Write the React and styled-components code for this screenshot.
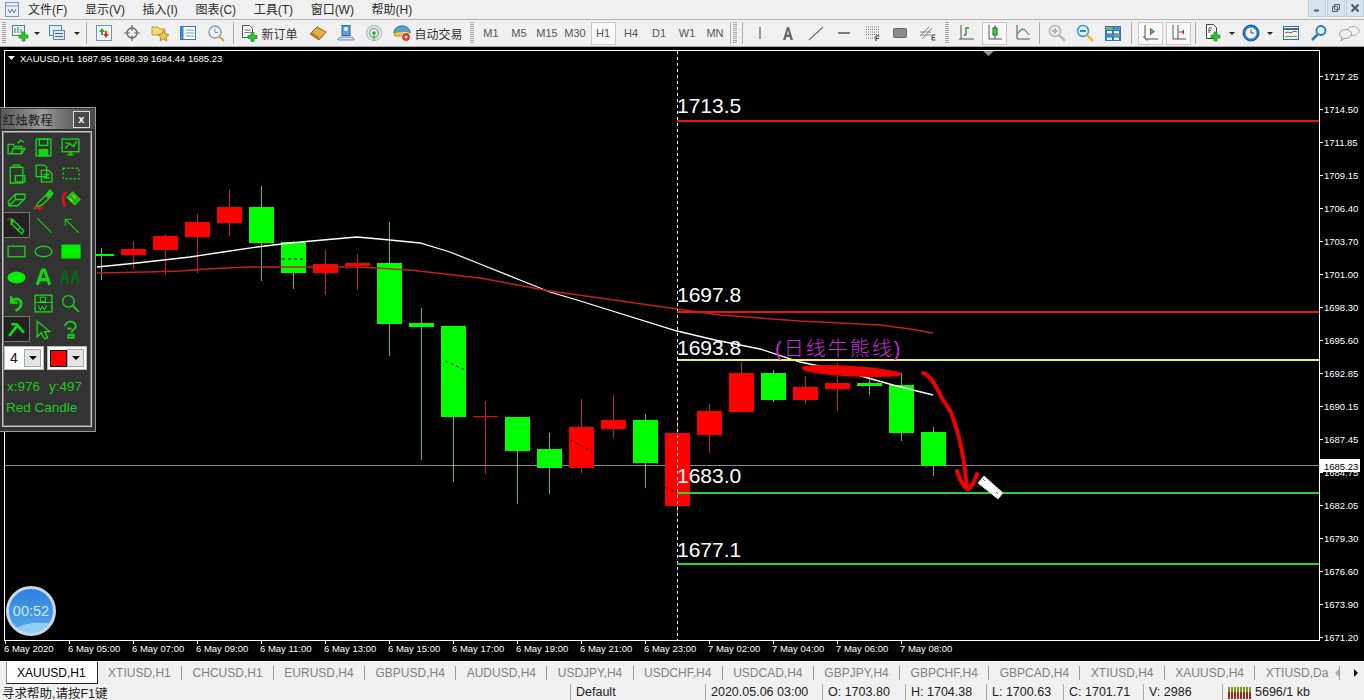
import React from 'react';
import styled, { createGlobalStyle } from 'styled-components';

const UI_FONT = `"Liberation Sans", "Noto Sans CJK SC", sans-serif`;
const GREEN = '#00ff00';
const RED = '#ff0000';

// x, wick top, wick bottom, body top, body bottom (page pixels)
const candles = [
  [101, 248, 280, 254, 256, 'g'],
  [133, 241, 269, 249, 255, 'r'],
  [165, 234, 275, 236, 250, 'r'],
  [197, 214, 273, 222, 237, 'r'],
  [229, 189, 236, 207, 223, 'r'],
  [261, 186, 281, 207, 243, 'g'],
  [293, 241, 289, 242, 273, 'g'],
  [325, 250, 295, 264, 273, 'r'],
  [357, 254, 290, 263, 266, 'r'],
  [389, 222, 356, 263, 324, 'g'],
  [421, 308, 460, 323, 327, 'g'],
  [453, 326, 482, 326, 417, 'g'],
  [485, 401, 474, 416, 417, 'r'],
  [517, 417, 504, 417, 451, 'g'],
  [549, 433, 494, 449, 468, 'g'],
  [581, 399, 473, 427, 468, 'r'],
  [613, 395, 438, 420, 429, 'r'],
  [645, 414, 488, 420, 463, 'g'],
  [677, 417, 513, 433, 506, 'r'],
  [709, 404, 453, 411, 435, 'r'],
  [741, 362, 412, 373, 412, 'r'],
  [773, 370, 402, 373, 400, 'g'],
  [805, 376, 404, 387, 400, 'r'],
  [837, 363, 411, 383, 389, 'r'],
  [869, 370, 395, 383, 386, 'g'],
  [901, 373, 441, 385, 433, 'g'],
  [933, 427, 476, 432, 466, 'g'],
];

const prices = ['1717.25', '1714.50', '1711.85', '1709.15', '1706.40', '1703.70', '1701.00', '1698.30', '1695.60',
  '1692.85', '1690.15', '1687.45', '1684.75', '1682.05', '1679.30', '1676.60', '1673.90', '1671.20'];

const times = ['6 May 2020', '6 May 05:00', '6 May 07:00', '6 May 09:00', '6 May 11:00', '6 May 13:00', '6 May 15:00',
  '6 May 17:00', '6 May 19:00', '6 May 21:00', '6 May 23:00', '7 May 02:00', '7 May 04:00', '7 May 06:00', '7 May 08:00'];

const levels = [
  { y: 120, label: '1713.5', color: '#e81515' },
  { y: 311, label: '1697.8', color: '#e81515' },
  { y: 359, label: '1693.8', color: '#f4f45a' },
  { y: 492, label: '1683.0', color: '#2fd02f' },
  { y: 563, label: '1677.1', color: '#2fd02f' },
];

const levelLabelY = { '1713.5': 113, '1697.8': 302, '1693.8': 355, '1683.0': 483, '1677.1': 557 };

const tabs = ['XAUUSD,H1', 'XTIUSD,H1', 'CHCUSD,H1', 'EURUSD,H4', 'GBPUSD,H4', 'AUDUSD,H4', 'USDJPY,H4', 'USDCHF,H4',
  'USDCAD,H4', 'GBPJPY,H4', 'GBPCHF,H4', 'GBPCAD,H4', 'XTIUSD,H4', 'XAUUSD,H4', 'XTIUSD,Da'];

const menus = ['文件(F)', '显示(V)', '插入(I)', '图表(C)', '工具(T)', '窗口(W)', '帮助(H)'];

const periods = ['M1', 'M5', 'M15', 'M30', 'H1', 'H4', 'D1', 'W1', 'MN'];

const GlobalStyle = createGlobalStyle`
  html, body {
    margin: 0;
    padding: 0;
    background: #f0f0f0;
    overflow: hidden;
  }
  * {
    box-sizing: border-box;
  }
`;

const Page = styled.div`
  width: 1364px;
  height: 700px;
  display: flex;
  flex-direction: column;
  font-family: ${UI_FONT};
  background: #f0f0f0;
  overflow: hidden;
`;

const MenuBar = styled.div`
  height: 20px;
  display: flex;
  align-items: center;
  padding-left: 4px;
  border-bottom: 1px solid #b4b4b4;
  flex: none;
`;

const MenuList = styled.div`
  display: flex;
  gap: 17.6px;
  margin-left: 8px;
`;

const MenuItem = styled.span`
  font-size: 12px;
  line-height: 16px;
  color: #2c2c2c;
`;

const WindowButtons = styled.div`
  margin-left: auto;
  display: flex;
  gap: 1px;
  align-self: flex-start;
`;

const WindowButton = styled.div`
  width: 18px;
  height: 17px;
  background: #d6e4f0;
  border: 1px solid #b9cfe0;
  border-top: none;
  display: flex;
  align-items: center;
  justify-content: center;
`;

const Toolbar = styled.div`
  height: 27px;
  flex: none;
  display: flex;
  align-items: center;
  border-bottom: 1px solid #a8a8a8;
`;

const Grip = styled.div`
  width: ${p => p.$w}px;
  height: 22px;
  flex: none;
  display: flex;
  justify-content: center;
  &::before {
    content: '';
    width: 4px;
    height: 100%;
    background: repeating-linear-gradient(to bottom, #a4a4a4 0 1px, #f0f0f0 1px 2px);
  }
`;

const Separator = styled.div`
  width: ${p => p.$w}px;
  height: 22px;
  flex: none;
  display: flex;
  justify-content: center;
  &::before {
    content: '';
    width: 1px;
    height: 100%;
    background: #aaaaaa;
  }
`;

const ToolButton = styled.div`
  width: ${p => (p.$active ? (p.$w || 28) - 3 : p.$w || 28)}px;
  margin: ${p => (p.$active ? '0 1.5px' : '0')};
  height: 23px;
  flex: none;
  display: flex;
  align-items: center;
  justify-content: center;
  gap: 3px;
  font-size: 12px;
  color: #333;
  border: ${p => (p.$active ? '1px solid #c6c6c6' : 'none')};
  background: ${p => (p.$active ? '#f9f9f9' : 'transparent')};
`;

const PeriodLabel = styled.span`
  font-size: 11px;
  color: #555;
`;

const Caret = styled.div`
  width: ${p => p.$w}px;
  flex: none;
  display: flex;
  justify-content: center;
  &::before {
    content: '';
    border-left: 3px solid transparent;
    border-right: 3px solid transparent;
    border-top: 3px solid #222;
  }
`;

const Spacer = styled.div`
  width: ${p => p.$w}px;
  flex: none;
`;

const ChartArea = styled.div`
  position: relative;
  height: 614px;
  flex: none;
  background: #000;
`;

const ChartSvg = styled.svg`
  display: block;
  width: 1364px;
  height: 614px;
`;

const ScaleText = styled.text`
  font-family: ${UI_FONT};
  font-size: 9.5px;
  fill: ${p => p.$fill || '#ffffff'};
`;

const LevelText = styled.text`
  font-family: ${UI_FONT};
  font-size: 21px;
  fill: #ffffff;
`;

const NoteText = styled.text`
  font-family: ${UI_FONT};
  font-size: 20px;
  letter-spacing: 2px;
  font-weight: 300;
  fill: #c430d8;
`;

const ToolPanel = styled.div`
  position: absolute;
  left: 0;
  top: 60px;
  width: 96px;
  height: 325px;
  background: #333333;
  border: 1px solid #9a9a9a;
  border-left: none;
  padding: 1px 0 0 1px;
  display: flex;
  flex-direction: column;
`;

const PanelTitle = styled.div`
  height: 20px;
  flex: none;
  display: flex;
  align-items: flex-end;
  justify-content: space-between;
  padding: 0 5px 1px 2px;
  background: linear-gradient(to right, #5a5a5a, #9c9c9c 45%, #777 62%, #4a4a4a);
  font-size: 12px;
  letter-spacing: 0.5px;
  color: #1c1c1c;
`;

const PanelClose = styled.div`
  width: 17px;
  height: 17px;
  border: 1px solid #ddd;
  background: #4a4a4a;
  color: #fff;
  font-size: 11px;
  font-weight: 700;
  line-height: 14px;
  text-align: center;
`;

const PanelBody = styled.div`
  margin: 2px 3px 4px 1px;
  flex: 1;
  border: 1px solid #c8c8c8;
  outline: 1px solid #777;
  outline-offset: -2px;
  padding: 2px 1px 0 0;
  display: flex;
  flex-direction: column;
`;

const ToolGrid = styled.div`
  display: grid;
  grid-template-columns: repeat(3, 27px);
  grid-auto-rows: 26px;
`;

const PanelTool = styled.div`
  display: flex;
  align-items: center;
  justify-content: center;
  border: 1px solid ${p => (p.$active ? '#777' : 'transparent')};
  background: ${p => (p.$active ? '#222' : 'transparent')};
`;

const PickerRow = styled.div`
  display: flex;
  gap: 3px;
  margin: 4px 0 0 1px;
`;

const Picker = styled.div`
  width: 40px;
  height: 24px;
  display: flex;
  align-items: center;
  justify-content: space-between;
  background: #fff;
  border: 1px solid #bbb;
  padding: 2px;
  font-size: 14px;
  color: #111;
`;

const PickerValue = styled.span`
  padding-left: 3px;
`;

const Swatch = styled.span`
  width: 17px;
  height: 17px;
  background: ${RED};
  border: 1px solid #000;
`;

const PickerArrow = styled.span`
  width: 17px;
  height: 18px;
  background: #e4e4e4;
  border: 1px solid #aaa;
  display: flex;
  align-items: center;
  justify-content: center;
  &::before {
    content: '';
    border-left: 4px solid transparent;
    border-right: 4px solid transparent;
    border-top: 4px solid #000;
  }
`;

const CoordRow = styled.div`
  display: flex;
  gap: 9px;
  margin: 9px 0 0 4px;
  font-size: 13.5px;
  line-height: 16px;
  color: #1ccc1c;
`;

const PanelStatus = styled.div`
  margin: 5px 0 0 3px;
  font-size: 13.5px;
  line-height: 16px;
  white-space: nowrap;
  color: #1ccc1c;
`;

const ClockBadge = styled.div`
  position: absolute;
  left: 6px;
  top: 539px;
  width: 50px;
  height: 50px;
  border-radius: 50%;
  border: 3px solid #c9d6e4;
  background:
    radial-gradient(ellipse 46px 22px at 70% 108%, #8fd0f4 0 62%, transparent 64%),
    linear-gradient(to bottom, #2f80dc, #52a8ea);
  display: flex;
  align-items: center;
  justify-content: center;
  font-size: 14.5px;
  color: #cfe8fa;
`;

const TabBar = styled.div`
  position: relative;
  height: 23px;
  flex: none;
  display: flex;
  align-items: center;
  padding-left: 6px;
  border-top: 1px solid #fff;
  overflow: hidden;
`;

const Tab = styled.div`
  height: ${p => (p.$active ? '22px' : '14px')};
  display: flex;
  align-items: center;
  padding: ${p => (p.$active ? '0 11px 0 10px' : '0 10.4px')};
  font-size: 12px;
  white-space: nowrap;
  color: ${p => (p.$active ? '#000' : '#808080')};
  background: ${p => (p.$active ? '#fff' : 'transparent')};
  border-right: 1px solid ${p => (p.$active ? '#222' : '#9a9a9a')};
  border-left: ${p => (p.$active ? '1px solid #888' : 'none')};
  border-bottom: ${p => (p.$active ? '1px solid #222' : 'none')};
  align-self: ${p => (p.$active ? 'flex-start' : 'center')};
  &:nth-last-of-type(1) {
    border-right: none;
  }
`;

const TabArrows = styled.div`
  position: absolute;
  right: 6px;
  top: 7px;
  display: flex;
  gap: 15px;
`;

const TabArrow = styled.span`
  border-top: 4px solid transparent;
  border-bottom: 4px solid transparent;
  ${p => (p.$left ? 'border-right: 4px solid #aaa;' : 'border-left: 4px solid #111;')}
`;

const StatusBar = styled.div`
  height: 16px;
  flex: none;
  display: flex;
  align-items: center;
  font-size: 12.5px;
  color: #222;
`;

const StatusCell = styled.div`
  width: ${p => p.$w}px;
  height: 16px;
  flex: none;
  display: flex;
  align-items: center;
  gap: 4px;
  padding-left: ${p => (p.$first ? '2px' : '5px')};
  border-left: ${p => (p.$first ? 'none' : '1px solid #a8a8a8')};
  white-space: nowrap;
`;

const S = ({ children, w = 18, h = 18 }) => (
  <svg width={w} height={h} viewBox={`0 0 ${w} ${h}`}>{children}</svg>
);

const Plus = ({ x = 0, y = 0 }) => (
  <path transform={`translate(${x} ${y})`} d="M3 0h3v3h3v3H6v3H3V6H0V3h3z" fill="#2fc42f" stroke="#138a13" strokeWidth=".7" />
);

const AppIcon = () => (
  <S w={16} h={17}>
    <rect x="1.5" y="1.5" width="13" height="14" fill="#e6eef6" stroke="#7a9cbc" />
    <path d="M1.5 5h13" stroke="#7a9cbc" />
    <path d="M4 8l2 4 2-4 2 4 2-4" fill="none" stroke="#5c7fa4" />
  </S>
);

const NewChartIcon = () => (
  <S>
    <rect x="1.5" y="1.5" width="12" height="10" fill="#eaf1f8" stroke="#4f7da8" />
    <path d="M4 4v5M7 3v6M10 5v4" stroke="#2f8a2f" />
    <Plus x={8} y={8} />
  </S>
);

const ProfilesIcon = () => (
  <S>
    <rect x="1.5" y="1.5" width="12" height="10" fill="#e4edf5" stroke="#5c86ae" />
    <rect x="5.5" y="6.5" width="11" height="9" fill="#dce8f2" stroke="#5c86ae" />
    <path d="M7 9.5h8M7 12.5h8" stroke="#4a6e90" />
  </S>
);

const MarketIcon = () => (
  <S>
    <rect x="1.5" y="1.5" width="15" height="15" fill="#f2f5f8" stroke="#6f95b8" />
    <path d="M7 4l-3 4h2v3h2V8h2z" fill="#2fa82f" />
    <path d="M11 14l3-4h-2V7h-2v3H8z" fill="#d83a2a" />
  </S>
);

const CrossIcon = () => (
  <S>
    <circle cx="9" cy="9" r="5" fill="none" stroke="#666" strokeWidth="1.4" />
    <path d="M9 1v6M9 11v6M1 9h6M11 9h6" stroke="#666" strokeWidth="1.2" />
  </S>
);

const FavoritesIcon = () => (
  <S w={19}>
    <path d="M1 3h6l2 2h5v6H1z" fill="#f3d878" stroke="#b99a3c" />
    <path d="M12.500 6.500l1.700 3.600 3.800.5-2.800 2.600.7 3.800-3.400-1.900-3.400 1.900.7-3.800-2.800-2.600 3.800-.5z" fill="#f0c850" stroke="#a88a2c" />
  </S>
);

const NavigatorIcon = () => (
  <S>
    <rect x="1.500" y="2.500" width="15" height="13" fill="#fff" stroke="#3a78b8" />
    <rect x="1.500" y="2.500" width="3" height="13" fill="#3a88d0" />
    <path d="M7 6h8M7 9h8M7 12h8" stroke="#7f96aa" />
  </S>
);

const TesterIcon = () => (
  <S>
    <circle cx="8" cy="8" r="6" fill="#eef2f6" stroke="#90a0ae" strokeWidth="1.500" />
    <path d="M8 4.500v4h3" fill="none" stroke="#7a8a98" />
    <path d="M12 12l5 5" stroke="#d0a840" strokeWidth="2" />
  </S>
);

const NewOrderIcon = () => (
  <S>
    <path d="M2.500 1.500h7l3 3v9h-10z" fill="#f6f6f6" stroke="#555" />
    <path d="M4.500 6h6M4.500 8.500h6" stroke="#777" />
    <Plus x={8} y={8.500} />
  </S>
);

const GoldIcon = () => (
  <S>
    <path d="M1 10l7-7 9 5-7 8z" fill="#e2b03c" stroke="#8a6418" />
    <path d="M1 10l9 6v-3L3 8z" fill="#b8842a" />
  </S>
);

const PersonIcon = () => (
  <S>
    <path d="M1 16c0-3 3-3 5-3h7c3 0 4 1 4 3z" fill="#d8e4ee" stroke="#6a8aa8" />
    <rect x="5" y="1.500" width="8" height="10" fill="#5aa0e0" stroke="#2a66a8" />
    <circle cx="9" cy="5" r="2" fill="#f4f8fc" />
  </S>
);

const SignalIcon = () => (
  <S>
    <circle cx="9" cy="9" r="7.500" fill="none" stroke="#b4c4d0" strokeWidth="1.500" />
    <circle cx="9" cy="9" r="4.500" fill="none" stroke="#7ab47a" strokeWidth="1.500" />
    <circle cx="9" cy="9" r="1.800" fill="#3c9a3c" />
    <path d="M9 9v8" stroke="#3c9a3c" />
  </S>
);

const AutoIcon = () => (
  <S>
    <path d="M1 9c0-5 4-7 8-7s8 2 8 7z" fill="#4aa8d8" stroke="#2a6a98" />
    <path d="M1 9c4-2 12-2 16 0l-1 3H2z" fill="#f0c84a" stroke="#b08a28" />
    <circle cx="13" cy="13" r="4.500" fill="#d8402c" stroke="#f4f4f4" />
    <circle cx="13" cy="13" r="1.500" fill="#f4f4f4" />
  </S>
);

const CursorLineIcon = () => <S><path d="M9 3v12" stroke="#666" strokeWidth="1.300" /></S>;
const TextIcon = () => <S><path d="M4 16L8 3h2l4 13h-2.500l-.8-3H7.300l-.8 3zM7.900 10.500h2.200L9 6.500z" fill="#666" /></S>;
const TrendIcon = () => <S><path d="M2 16L16 3" stroke="#777" strokeWidth="1.300" /></S>;
const DashIcon = () => <S><path d="M3 9h12" stroke="#555" strokeWidth="1.500" /></S>;

const FiboIcon = () => (
  <S>
    <path d="M3 3h13M3 5.500h13M3 8h13M3 10.500h13" stroke="#777" strokeDasharray="1 1" />
    <path d="M3 14h9" stroke="#777" strokeDasharray="1 1" />
    <path d="M13 17v-5h3.500M13 14.500h3" fill="none" stroke="#444" strokeWidth="1.200" />
  </S>
);

const ShapeIcon = () => <S><rect x="2.500" y="4.500" width="13" height="9" rx="1" fill="#8a8a8a" stroke="#666" /></S>;

const HatchIcon = () => (
  <S>
    <path d="M1 12L10 3M3 15L13 4M1 8h11M2 11h10" stroke="#888" />
    <path d="M13 16v-5h3.500M13 13.500h3M13 16h3.500" fill="none" stroke="#444" />
  </S>
);

const BarChartIcon = () => (
  <S>
    <path d="M4 1v14h13M2 15h2" fill="none" stroke="#555" />
    <path d="M9 11V4h3M9 11H7" fill="none" stroke="#2e8a2e" strokeWidth="1.300" />
  </S>
);

const CandleChartIcon = () => (
  <S>
    <path d="M4 1v14h13" fill="none" stroke="#555" />
    <path d="M10 1v14" stroke="#226622" />
    <rect x="8" y="4" width="4" height="7" fill="#3cd03c" stroke="#226622" />
  </S>
);

const LineChartIcon = () => (
  <S>
    <path d="M4 1v14h13" fill="none" stroke="#555" />
    <path d="M4 10l5-5 3 1 4 5" fill="none" stroke="#3c9a3c" strokeWidth="1.200" />
  </S>
);

const ZoomInIcon = () => (
  <S>
    <circle cx="7" cy="7" r="5.500" fill="#eeeeee" stroke="#b4b4b4" strokeWidth="1.500" />
    <path d="M4 7h6M7 4v6" stroke="#aaa" strokeWidth="1.500" />
    <path d="M11 11l6 6" stroke="#bbb" strokeWidth="2.500" />
  </S>
);

const ZoomOutIcon = () => (
  <S>
    <circle cx="7" cy="7" r="5.500" fill="#dff0fb" stroke="#3a9ad8" strokeWidth="1.500" />
    <path d="M4 7h6" stroke="#2a7ab8" strokeWidth="1.800" />
    <path d="M11 11l6 6" stroke="#e4c030" strokeWidth="2.500" />
  </S>
);

const TileIcon = () => (
  <S>
    <rect x="1" y="2" width="16" height="15" fill="#3a74c0" />
    <rect x="2" y="3" width="6.500" height="3" fill="#6cc04a" />
    <rect x="9.500" y="3" width="6.500" height="3" fill="#3a9ad8" />
    <rect x="3" y="7" width="5" height="2.500" fill="#eef6e8" />
    <rect x="10" y="7" width="5" height="2.500" fill="#eef6e8" />
    <rect x="2" y="10.500" width="6.500" height="2" fill="#3a9ad8" />
    <rect x="9.500" y="10.500" width="6.500" height="2" fill="#6cc04a" />
    <rect x="3" y="13.500" width="5" height="2.500" fill="#e4eef8" />
    <rect x="10" y="13.500" width="5" height="2.500" fill="#e4eef8" />
  </S>
);

const AutoScrollIcon = () => (
  <S>
    <path d="M4 1v14h13M2 13h2M6 15v2" fill="none" stroke="#555" />
    <path d="M9.500 4.500v6l4-3z" fill="#58c058" stroke="#2e8a2e" />
  </S>
);

const ShiftIcon = () => (
  <S>
    <path d="M4 1v14h13M9 1v14" fill="none" stroke="#555" />
    <path d="M15 5.500l-3 2.500 3 2.500z" fill="#c0392b" />
    <path d="M12 8h-2" stroke="#c0392b" />
  </S>
);

const NewDocIcon = () => (
  <S w={20} h={20}>
    <path d="M3.500 1.500h7l3 3v11h-10z" fill="#fafafa" stroke="#444" />
    <path d="M6 5v5M6 5h3M6 7.500h2" fill="none" stroke="#555" />
    <Plus x={8} y={9} />
  </S>
);

const ClockIcon = () => (
  <S>
    <circle cx="9" cy="9" r="8" fill="#2a7ac8" stroke="#1a5a98" />
    <circle cx="9" cy="9" r="5.500" fill="#f4f8fc" />
    <path d="M9 5.500V9h3" fill="none" stroke="#444" />
  </S>
);

const IndicatorsIcon = () => (
  <S>
    <rect x="1.500" y="2.500" width="15" height="13" fill="#fbfbfb" stroke="#3a6e9e" />
    <path d="M1.500 5h15" stroke="#3a6e9e" strokeWidth="2" />
    <path d="M3 9l3-1 3 1 3-2 3 1" fill="none" stroke="#c0392b" />
    <path d="M3 13l3-1 3 1 3-1 3 1" fill="none" stroke="#3c9a3c" />
  </S>
);

const SearchIcon = () => (
  <S>
    <circle cx="11" cy="6.500" r="4.500" fill="#e8f2fa" stroke="#2a74c0" strokeWidth="1.800" />
    <path d="M7.500 10.500L2 16" stroke="#2a74c0" strokeWidth="2.500" />
  </S>
);

const ChatIcon = () => (
  <S w={22}>
    <ellipse cx="15" cy="7" rx="6" ry="4.500" fill="#f4f4f4" stroke="#aaa" />
    <ellipse cx="7.500" cy="10" rx="6" ry="4.500" fill="#eeeeee" stroke="#999" />
    <path d="M4 13.500L3 17l4-3" fill="#eee" stroke="#999" />
  </S>
);

// drawing tools of the floating panel, in reading order
const panelIcons = [
  <><path d="M2 16V7h5l1 2h7v7z" /><path d="M5 16l2-5h11l-3 5M11 6l3-3 3 2" /></>,
  <><rect x="3" y="2" width="14" height="16" /><rect x="6" y="2" width="8" height="6" /><rect x="6" y="12" width="8" height="6" fill="#14d814" /></>,
  <><rect x="2" y="2" width="16" height="12" /><path d="M7 17h6M9 14v3M11 14v3M5 11l4-5 4 3 3-5M5 5l4 2" /></>,
  <><path d="M4 4h12v15H4zM7 4V2h6v2" /><rect x="9" y="12" width="9" height="6" /></>,
  <><path d="M3 2h8l2 2v9H3z" /><path d="M8 7h7l3 3v8H8zM10 11h6M10 14h6" /></>,
  <><rect x="3" y="5" width="15" height="10" strokeDasharray="2 2" /></>,
  <><path d="M2 12l7-7h9v4l-7 7H3z" /><path d="M9 5v5l-6 6M9 10h9" /></>,
  <><path d="M2 18l4-6 6-6 3 3-6 6z" fill="none" /><path d="M13 5l3-4 3 3-3 4z" fill="#14d814" /><path d="M1 17l8 1-3 2z" fill="#d81414" stroke="#d81414" /></>,
  <><path d="M7 8l5-5 7 7-5 5z" fill="#14b814" /><path d="M9 9l3 3M12 6l3 3" stroke="#d8c014" /><path d="M6 3C2 6 2 12 5 17" stroke="#d81414" strokeWidth="2.500" /></>,
  <><path d="M1 4h6" stroke="#e01414" /><path d="M7 5l10 10-2 3L5 8z" /><path d="M7 5l-2 3 0-4zM13 12l-2 3" fill="#14d814" /></>,
  <><path d="M4 3l14 14" strokeWidth="1" /></>,
  <><path d="M5 4l13 13M5 4h6M5 4v6" strokeWidth="1" /></>,
  <><rect x="2" y="5" width="16" height="10" /></>,
  <><ellipse cx="10" cy="10" rx="8" ry="5" /></>,
  <><rect x="2" y="4" width="17" height="12" fill="#00f000" stroke="#00f000" /></>,
  <><ellipse cx="10" cy="10" rx="8" ry="5" fill="#00f000" stroke="#00f000" /></>,
  <><path d="M4 17L9 3h2l5 14M6 12h8" strokeWidth="3" /></>,
  <g stroke="#0a6a1a" strokeWidth="2"><path d="M1 16L4 4h1l3 12M2.500 11h4M11 16l3-12h1l3 12M12.500 11h4" /></g>,
  <><path d="M5 3v6h6M5 9c4-6 11-3 9 3-1 3-3 4-5 5" strokeWidth="2.500" /></>,
  <><rect x="2" y="2" width="16" height="16" /><path d="M2 9h16M7 4h5v4H7zM5 12l2 4 2-3 2 3 2-4" strokeWidth="1" /></>,
  <><circle cx="8" cy="8" r="5.500" /><path d="M12 12l6 6" strokeWidth="1.600" /></>,
  <><path d="M3 16L11 6l6 7M5 5h5l2 2" strokeWidth="2.600" /></>,
  <><path d="M4 2v15l4-4 3 6 3-1-3-6h5z" /></>,
  <><path d="M5 7c0-6 10-6 10 0 0 3-4 3-4 6M7 9h4M8 15h5v3H8z" strokeWidth="1.800" /></>,
];

const PanelGlyph = styled.svg`
  width: 21px;
  height: 21px;
  fill: none;
  stroke: #14d814;
  stroke-width: 1.300;
`;

const Candle = ({ c }) => {
  const [x, top, bottom, bodyTop, bodyBottom, kind] = c;
  const up = kind === 'r';
  return (
    <g>
      <rect x={x} y={top} width="1" height={bottom - top} fill={up ? '#cc1c1c' : '#34d034'} />
      <rect x={x - 12} y={bodyTop} width="25" height={bodyBottom - bodyTop} fill={up ? RED : GREEN} />
    </g>
  );
};

const PriceChart = () => (
  <ChartSvg viewBox="0 47 1364 614">
    <g shapeRendering="crispEdges">
      <rect x="4" y="50" width="1" height="591" fill="#fff" />
      <rect x="4" y="50" width="1315" height="1" fill="#fff" />
      <rect x="1319" y="50" width="1" height="591" fill="#fff" />
      <rect x="4" y="640" width="1316" height="1" fill="#fff" />
      <rect x="5" y="465" width="1314" height="1" fill="#8a8a8a" />
      {candles.map(c => <Candle key={c[0]} c={c} />)}
    </g>

    <g fill="none" strokeDasharray="3 3" stroke="#000">
      <path d="M282 259h22M445 361l20 9M570 440l23 12M665 487l12 5" />
    </g>

    <path
      d="M97 267L137 263 190 257 223 252 257 247 290 243 323 240 357 237 390 240 420 243 450 252 480 264 520 280 550 292 577 300 677 331 715 340 760 349 800 362 843 371 893 385 933 395"
      fill="none" stroke="#ffffff" strokeWidth="1.300"
    />
    <path
      d="M97 273L147 272 180 271 207 269 247 267 307 267 357 267 410 270 480 278 550 291 600 298 677 309 720 315 800 321 880 325 910 329 933 333"
      fill="none" stroke="#c42020" strokeWidth="1.500"
    />

    <path d="M677.500 51V640" stroke="#fff" strokeDasharray="3 3" shapeRendering="crispEdges" />

    {levels.map(l => (
      <g key={l.label}>
        <rect x="677" y={l.y} width="642" height="2" fill={l.color} shapeRendering="crispEdges" />
        <LevelText x="677" y={levelLabelY[l.label]}>{l.label}</LevelText>
      </g>
    ))}

    <NoteText x="775" y="356">(日线牛熊线)</NoteText>

    <g fill="none" stroke="#f00000" strokeLinecap="round" strokeLinejoin="round">
      <path d="M804 368C825 366 870 367 899 374C880 376 845 375 822 372C815 371 808 371 804 368" fill="#f00000" strokeWidth="4" />
      <path d="M923 373C930 374 937 388 943 400C948 408 951 409 953 418C958 432 962 450 964 462L967 488" strokeWidth="4" />
      <path d="M957 471C960 480 964 488 968 489C972 488 975 480 977 474" strokeWidth="4" />
    </g>

    <path d="M984 476L1003 493 998 499 978 483z" fill="#fff" stroke="#cfcfcf" />
    <path d="M985 481L983 479M998 494L996 492" stroke="#777" />

    <path d="M8 56h7l-3.500 4z" fill="#fff" />
    <ScaleText x="20" y="62">XAUUSD,H1  1687.95 1688.39 1684.44 1685.23</ScaleText>
    <path d="M983 51h11l-5.500 5z" fill="#909090" />

    {prices.map((p, i) => {
      const y = 76 + i * 33;
      return (
        <g key={p}>
          <rect x="1320" y={y} width="3" height="1" fill="#fff" shapeRendering="crispEdges" />
          <ScaleText x="1324" y={y + 4}>{p}</ScaleText>
        </g>
      );
    })}

    {times.map((t, i) => {
      const x = 5 + i * 64;
      return (
        <g key={t}>
          <rect x={x} y="641" width="1" height="3" fill="#fff" shapeRendering="crispEdges" />
          <ScaleText x={x - 1} y="652">{t}</ScaleText>
        </g>
      );
    })}

    <rect x="1320" y="459" width="40" height="13" fill="#fff" shapeRendering="crispEdges" />
    <ScaleText x="1324" y="470" $fill="#000">1685.23</ScaleText>
  </ChartSvg>
);

const App = () => (
  <Page>
    <GlobalStyle />
    <MenuBar>
      <AppIcon />
      <MenuList>
        {menus.map(m => <MenuItem key={m}>{m}</MenuItem>)}
      </MenuList>
      <WindowButtons>
        <WindowButton>
          <svg width="10" height="10"><path d="M2 7.500h5" stroke="#556" strokeWidth="2" /></svg>
        </WindowButton>
        <WindowButton>
          <svg width="10" height="10"><path d="M3.500 1.500h5v5h-5zM1.500 3.500h5v5h-5z" fill="none" stroke="#556" /></svg>
        </WindowButton>
        <WindowButton>
          <svg width="10" height="10"><path d="M1.500 1.500l7 7M8.500 1.500l-7 7" stroke="#556" strokeWidth="2" /></svg>
        </WindowButton>
      </WindowButtons>
    </MenuBar>

    <Toolbar>
      <Grip $w={8} />
      <ToolButton $w={24}><NewChartIcon /></ToolButton>
      <Caret $w={10} />
      <ToolButton $w={30}><ProfilesIcon /></ToolButton>
      <Caret $w={10} />
      <Separator $w={8} />
      <ToolButton><MarketIcon /></ToolButton>
      <ToolButton><CrossIcon /></ToolButton>
      <ToolButton><FavoritesIcon /></ToolButton>
      <ToolButton><NavigatorIcon /></ToolButton>
      <ToolButton><TesterIcon /></ToolButton>
      <Separator $w={6} />
      <ToolButton $w={66}><NewOrderIcon />新订单</ToolButton>
      <Spacer $w={2} />
      <ToolButton><GoldIcon /></ToolButton>
      <ToolButton><PersonIcon /></ToolButton>
      <ToolButton><SignalIcon /></ToolButton>
      <Spacer $w={2} />
      <ToolButton $w={76}><AutoIcon />自动交易</ToolButton>
      <Grip $w={11} />
      {periods.map(p => (
        <ToolButton key={p} $active={p === 'H1'}><PeriodLabel>{p}</PeriodLabel></ToolButton>
      ))}
      <Separator $w={3} />
      <Grip $w={6} />
      <Separator $w={8} />
      <ToolButton><CursorLineIcon /></ToolButton>
      <ToolButton><TextIcon /></ToolButton>
      <ToolButton><TrendIcon /></ToolButton>
      <ToolButton><DashIcon /></ToolButton>
      <ToolButton><FiboIcon /></ToolButton>
      <ToolButton><ShapeIcon /></ToolButton>
      <ToolButton><HatchIcon /></ToolButton>
      <Grip $w={10} />
      <ToolButton><BarChartIcon /></ToolButton>
      <ToolButton $active><CandleChartIcon /></ToolButton>
      <ToolButton><LineChartIcon /></ToolButton>
      <Separator $w={7} />
      <ToolButton><ZoomInIcon /></ToolButton>
      <ToolButton><ZoomOutIcon /></ToolButton>
      <ToolButton><TileIcon /></ToolButton>
      <Separator $w={9} />
      <ToolButton $active><AutoScrollIcon /></ToolButton>
      <ToolButton $active><ShiftIcon /></ToolButton>
      <Separator $w={6} />
      <ToolButton $w={30}><NewDocIcon /></ToolButton>
      <Caret $w={8} />
      <ToolButton $w={30}><ClockIcon /></ToolButton>
      <Caret $w={8} />
      <Spacer $w={3} />
      <ToolButton><IndicatorsIcon /></ToolButton>
      <ToolButton><SearchIcon /></ToolButton>
      <Spacer $w={2} />
      <ToolButton><ChatIcon /></ToolButton>
    </Toolbar>

    <ChartArea>
      <PriceChart />
      <ToolPanel>
        <PanelTitle>
          红烛教程
          <PanelClose>x</PanelClose>
        </PanelTitle>
        <PanelBody>
          <ToolGrid>
            {panelIcons.map((icon, i) => (
              <PanelTool key={i} $active={i === 9 || i === 21}>
                <PanelGlyph viewBox="0 0 20 20">{icon}</PanelGlyph>
              </PanelTool>
            ))}
          </ToolGrid>
          <PickerRow>
            <Picker><PickerValue>4</PickerValue><PickerArrow /></Picker>
            <Picker><Swatch /><PickerArrow /></Picker>
          </PickerRow>
          <CoordRow>
            <span>x:976</span>
            <span>y:497</span>
          </CoordRow>
          <PanelStatus>Red Candle</PanelStatus>
        </PanelBody>
      </ToolPanel>
      <ClockBadge>00:52</ClockBadge>
    </ChartArea>

    <TabBar>
      {tabs.map((t, i) => <Tab key={t} $active={i === 0}>{t}</Tab>)}
      <TabArrows>
        <TabArrow $left />
        <TabArrow />
      </TabArrows>
    </TabBar>

    <StatusBar>
      <StatusCell $w={570} $first>寻求帮助,请按F1键</StatusCell>
      <StatusCell $w={135}>Default</StatusCell>
      <StatusCell $w={117}>2020.05.06 03:00</StatusCell>
      <StatusCell $w={83}>O: 1703.80</StatusCell>
      <StatusCell $w={81}>H: 1704.38</StatusCell>
      <StatusCell $w={77}>L: 1700.63</StatusCell>
      <StatusCell $w={80}>C: 1701.71</StatusCell>
      <StatusCell $w={79}>V: 2986</StatusCell>
      <StatusCell $w={142}>
        <svg width="23" height="14">
          {Array.from({ length: 8 }).map((_, i) => (
            <g key={i}>
              <rect x={i * 3} y={2} width="2" height="5" fill="#7a9a1c" />
              <rect x={i * 3} y={7} width="2" height="7" fill="#9a2a1c" />
            </g>
          ))}
        </svg>
        5696/1 kb
      </StatusCell>
    </StatusBar>
  </Page>
);

export default App;
